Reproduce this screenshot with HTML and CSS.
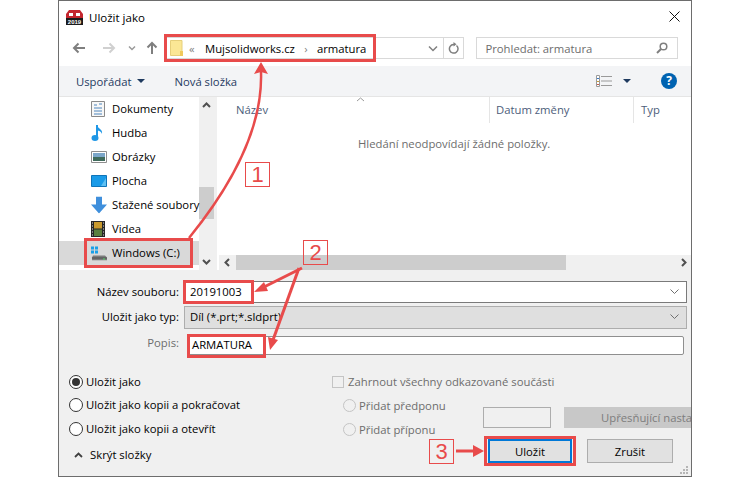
FILE: index.html
```html
<!DOCTYPE html>
<html lang="cs">
<head>
<meta charset="utf-8">
<title>Uložit jako</title>
<link rel="stylesheet" href="styles.css">
</head>
<body>
<div class="stage">
  <div class="dialog">
    <header class="titlebar">
      <svg class="app-icon" width="17" height="16" viewBox="0 0 17 16"><path d="M0 5 L3 1 H14 L17 5 V10 H0Z" fill="#c4262e"/><path d="M3 4h4v3H3zM10 4h4v3h-4z" fill="#fff"/><rect y="9" width="17" height="7" fill="#1b1b1b"/><text x="8.5" y="15" class="app-year">2019</text></svg>
      <span class="title-text">Uložit jako</span>
      <svg class="close-x" width="11" height="11" viewBox="0 0 11 11"><path d="M.5.5l10 10M10.500.5l-10 10" stroke="#111" stroke-width="1" fill="none"/></svg>
    </header>
    <div class="navbar">
      <svg class="nav-ic" width="14" height="12" viewBox="0 0 14 12"><path d="M13 6H2M6.500 1.500 2 6l4.500 4.500" stroke="#7f7f7f" stroke-width="2" fill="none"/></svg>
      <svg class="nav-ic nav-fwd" width="14" height="12" viewBox="0 0 14 12"><path d="M1 6h11M7.500 1.500 12 6l-4.500 4.500" stroke="#d0d0d0" stroke-width="2" fill="none"/></svg>
      <svg class="nav-ic nav-drop" width="8" height="6" viewBox="0 0 8 6"><path d="M1 1.500l3 3 3-3" stroke="#9a9a9a" stroke-width="1.500" fill="none"/></svg>
      <svg class="nav-ic nav-up" width="12" height="14" viewBox="0 0 12 14"><path d="M6 13V2M1.500 6.500 6 2l4.500 4.500" stroke="#7f7f7f" stroke-width="2" fill="none"/></svg>
      <div class="address">
        <svg class="folder" width="13" height="16" viewBox="0 0 13 16"><path d="M.5.500h11.500v15H.5z" fill="#fbe795" stroke="#e6cf7a"/><path d="M10 11h3v5h-3z" fill="#f0c95c"/></svg>
        <span class="crumb-more">«</span>
        <span class="crumb">Mujsolidworks.cz</span>
        <span class="crumb-sep">›</span>
        <span class="crumb">armatura</span>
        <svg class="addr-drop" width="10" height="7" viewBox="0 0 10 7"><path d="M1 1.500l4 4 4-4" stroke="#808080" stroke-width="1.500" fill="none"/></svg>
        <span class="addr-refresh"><svg width="11" height="12" viewBox="0 0 11 12"><path d="M8.500 3.500A4.300 4.300 0 1 1 5.500 2.500H7" stroke="#7f7f7f" stroke-width="1.500" fill="none"/><path d="M5.500 0l3 2.300-3 2.200z" fill="#7f7f7f"/></svg></span>
      </div>
      <div class="search">
        <span>Prohledat: armatura</span>
        <svg width="12" height="12" viewBox="0 0 12 12"><circle cx="7.500" cy="4.500" r="3.300" stroke="#7f7f7f" stroke-width="1.500" fill="none"/><path d="M5 7l-4 4" stroke="#7f7f7f" stroke-width="2"/></svg>
      </div>
    </div>
    <div class="toolbar">
      <span class="tool">Uspořádat</span>
      <span class="tool-caret"></span>
      <span class="tool tool-new">Nová složka</span>
      <svg class="view-ic" width="16" height="12" viewBox="0 0 16 12"><path d="M.5.500h3v11h-3z" fill="#fff" stroke="#9a9a9a"/><path d="M1 3h2v1H1z" fill="#3a7bc8"/><path d="M1 6h2v1H1z" fill="#caa03c"/><path d="M1 9h2v1H1z" fill="#c75c4a"/><path d="M5 1.500h11M5 6h11M5 10.500h11" stroke="#9a9a9a"/></svg>
      <span class="tool-caret caret-view"></span>
      <span class="help">?</span>
    </div>
    <div class="browser">
      <nav class="sidebar">
        <div class="nav-list">
          <div class="nav-item">
            <svg width="14" height="16" viewBox="0 0 14 16"><path d="M.5.500h13v15H.5z" fill="#f7f7f7" stroke="#8a8a8a"/><path d="M3 4h3M8 3h3M3 7h8M3 10h8M3 13h8" stroke="#4f86bd"/></svg>
            <span>Dokumenty</span>
          </div>
          <div class="nav-item">
            <svg width="14" height="18" viewBox="0 0 14 18"><path d="M6 1v12" stroke="#1f97e6" stroke-width="2"/><path d="M6 1c1 4 6 4 5 9-1-3-3-3-5-4z" fill="#1f97e6"/><ellipse cx="4" cy="14" rx="3.500" ry="3" fill="#1f97e6"/></svg>
            <span>Hudba</span>
          </div>
          <div class="nav-item">
            <svg width="16" height="12" viewBox="0 0 16 12"><path d="M.5.500h15v11H.5z" fill="#fff" stroke="#8e8e8e"/><path d="M2 2h12v4H2z" fill="#7ba6c9"/><path d="M2 6h12v4H2z" fill="#3f6b5c"/></svg>
            <span>Obrázky</span>
          </div>
          <div class="nav-item">
            <svg width="16" height="12" viewBox="0 0 16 12"><path d="M.5.500h15v11H.5z" fill="#1a9be8" stroke="#0f74b8"/><path d="M10 11 15 3v8z" fill="#5fc0f2"/></svg>
            <span>Plocha</span>
          </div>
          <div class="nav-item">
            <svg width="16" height="17" viewBox="0 0 16 17"><path d="M5 0h6v8h5l-8 9-8-9h5z" fill="#3f8fdc"/></svg>
            <span>Stažené soubory</span>
          </div>
          <div class="nav-item">
            <svg width="14" height="16" viewBox="0 0 14 16"><rect width="14" height="16" fill="#262626"/><rect x="3" y="1" width="8" height="6.500" fill="#c99a2e"/><rect x="3" y="8.500" width="8" height="6.500" fill="#5a7f3e"/><path d="M1 2h1M1 5h1M1 8h1M1 11h1M1 14h1M12 2h1M12 5h1M12 8h1M12 11h1M12 14h1" stroke="#ddd"/></svg>
            <span>Videa</span>
          </div>
          <div class="nav-item nav-selected">
            <svg width="16" height="15" viewBox="0 0 16 15"><path d="M0 1h3v3H0zM4 1h3v3H4zM0 5h3v3H0zM4 5h3v3H4z" fill="#19a0e8"/><path d="M2 10h12l2 2v3H1v-3z" fill="#7c7c7c"/><path d="M1 12h15v1H1z" fill="#4d4d4d"/><path d="M12 13h2v1h-2z" fill="#4cd964"/></svg>
            <span>Windows (C:)</span>
          </div>
        </div>
        <div class="side-scroll">
          <svg class="sc-btn" width="9" height="6" viewBox="0 0 9 6"><path d="M1 5l3.500-3.500L8 5" stroke="#505050" stroke-width="2" fill="none"/></svg>
          <span class="side-thumb"></span>
          <svg class="sc-btn sc-down" width="9" height="6" viewBox="0 0 9 6"><path d="M1 1l3.500 3.500L8 1" stroke="#505050" stroke-width="2" fill="none"/></svg>
        </div>
      </nav>
      <section class="files">
        <div class="col-head">
          <span class="col col-name">Název<svg class="sort" width="9" height="5" viewBox="0 0 9 5"><path d="M1 4l3.500-3L8 4" stroke="#9a9a9a" fill="none"/></svg></span>
          <span class="col col-date">Datum změny</span>
          <span class="col col-type">Typ</span>
        </div>
        <p class="empty">Hledání neodpovídají žádné položky.</p>
        <div class="h-scroll">
          <svg class="hs-left" width="6" height="9" viewBox="0 0 6 9"><path d="M5 1 1.500 4.500 5 8" stroke="#505050" stroke-width="2" fill="none"/></svg>
          <span class="h-thumb"></span>
          <svg class="hs-right" width="6" height="9" viewBox="0 0 6 9"><path d="M1 1l3.500 3.500L1 8" stroke="#505050" stroke-width="2" fill="none"/></svg>
        </div>
      </section>
    </div>
    <div class="lower">
      <div class="form">
        <label class="f-label">Název souboru:</label>
        <div class="field field-name"><span>20191003</span><svg width="9" height="5" viewBox="0 0 9 5"><path d="M.5.500l4 4 4-4" stroke="#6f6f6f" fill="none"/></svg></div>
        <label class="f-label">Uložit jako typ:</label>
        <div class="field field-type"><span>Díl (*.prt;*.sldprt)</span><svg width="9" height="5" viewBox="0 0 9 5"><path d="M.5.500l4 4 4-4" stroke="#6f6f6f" fill="none"/></svg></div>
        <label class="f-label f-muted">Popis:</label>
        <div class="field field-desc"><span>ARMATURA</span></div>
      </div>
      <div class="options">
        <div class="opt-left">
          <div class="radio-row r1"><span class="radio radio-on"></span><span>Uložit jako</span></div>
          <div class="radio-row r2"><span class="radio"></span><span>Uložit jako kopii a pokračovat</span></div>
          <div class="radio-row r3"><span class="radio"></span><span>Uložit jako kopii a otevřít</span></div>
          <div class="hide-row"><svg width="9" height="6" viewBox="0 0 9 6"><path d="M1 5l3.500-3.500L8 5" stroke="#404040" stroke-width="1.800" fill="none"/></svg><span>Skrýt složky</span></div>
        </div>
        <div class="opt-mid">
          <div class="check-row"><span class="check"></span><span>Zahrnout všechny odkazované součásti</span></div>
          <div class="radio-row off r2b"><span class="radio"></span><span>Přidat předponu</span></div>
          <div class="radio-row off r3b"><span class="radio"></span><span>Přidat příponu</span></div>
        </div>
        <div class="opt-right">
          <div class="adv-row">
            <span class="adv-input"></span>
            <span class="adv-btn">Upřesňující nasta</span>
          </div>
          <div class="btn-row">
            <button class="btn btn-save">Uložit</button>
            <button class="btn btn-cancel">Zrušit</button>
          </div>
        </div>
      </div>
      <svg class="grip" width="9" height="9" viewBox="0 0 9 9"><path d="M7 1h2v2H7zM4 4h2v2H4zM7 4h2v2H7zM1 7h2v2H1zM4 7h2v2H4zM7 7h2v2H7z" fill="#b5b5b5"/></svg>
    </div>
  </div>
  <svg class="marks" width="750" height="477" viewBox="0 0 750 477">
    <g fill="none" stroke="#e84b4b" stroke-width="3">
      <rect x="165.500" y="35.500" width="209" height="25"/>
      <rect x="85.500" y="239.500" width="106" height="27"/>
      <rect x="184.500" y="281.500" width="68" height="21"/>
      <rect x="188.500" y="335.500" width="76" height="21"/>
      <rect x="485.500" y="437.500" width="89" height="27"/>
      <path d="M189 238C228 190 263 130 261 72" stroke-width="2.500"/>
      <path d="M302 268 262 288"/>
      <path d="M299 268 273 340"/>
      <path d="M456 451H476"/>
    </g>
    <g fill="#e84b4b">
      <path d="M261 62 268 74 261 72 254 74Z"/>
      <path d="M254 292 264 282 268 291Z"/>
      <path d="M270 350 268 337 278 340Z"/>
      <path d="M484 451 473 445V457Z"/>
    </g>
  </svg>
  <span class="tag tag1">1</span>
  <span class="tag tag2">2</span>
  <span class="tag tag3">3</span>
</div>
</body>
</html>
```

FILE: styles.css
```css
* { box-sizing: border-box; }
html, body { margin: 0; padding: 0; background: #fff; }
body { font-family: "Open Sans", "Noto Sans", sans-serif; font-size: 11.3px; color: #000; overflow: hidden; }
.stage { position: relative; width: 750px; height: 477px; padding-left: 58px; }
.dialog { width: 634px; height: 477px; border: 1px solid #6d6d6d; background: #fff; display: flex; flex-direction: column; overflow: hidden; }

.titlebar { height: 35px; flex: none; display: flex; align-items: center; padding: 0 0 3px 7px; gap: 6px; }
.app-year { font: bold 6px "Liberation Sans", sans-serif; fill: #fff; text-anchor: middle; }
.title-text { font-size: 11.5px; }
.close-x { margin-left: auto; margin-right: 11px; margin-top: -1px; }

.navbar { height: 30px; flex: none; display: flex; align-items: center; padding: 0 13px 6px 13px; }
.nav-ic { flex: none; }
.nav-fwd { margin-left: 16px; }
.nav-drop { margin-left: 12px; }
.nav-up { margin-left: 10px; margin-right: 6px; }
.address { width: 300px; height: 22px; border: 1px solid #d9d9d9; display: flex; align-items: center; padding-left: 4px; margin-left: 1px; }
.folder { flex: none; }
.crumb-more { margin-left: 6px; color: #7f7f7f; width: 16px; }
.crumb { color: #000; }
.crumb-sep { color: #7f7f7f; width: 22px; text-align: center; }
.addr-drop { margin-left: auto; margin-right: 5px; }
.addr-refresh { width: 20px; height: 20px; border-left: 1px solid #d9d9d9; display: flex; align-items: center; justify-content: center; }
.search { width: 202px; height: 22px; margin-left: 12px; border: 1px solid #d9d9d9; display: flex; align-items: center; justify-content: space-between; padding: 0 9px 0 8px; color: #6d6d6d; }

.toolbar { height: 31px; flex: none; background: #f3f4f6; border-bottom: 1px solid #e5e5e5; display: flex; align-items: center; padding: 0 14px 0 17px; }
.tool { color: #1f3a5f; }
.tool-caret { width: 0; height: 0; border-left: 4px solid transparent; border-right: 4px solid transparent; border-top: 4px solid #1f3a5f; margin-left: 6px; }
.tool-new { margin-left: 29px; }
.view-ic { margin-left: auto; }
.caret-view { margin-left: 11px; }
.help { width: 16px; height: 16px; border-radius: 50%; background: #0063b1; color: #fff; font-weight: 700; font-size: 12px; line-height: 16px; text-align: center; margin-left: 30px; }

.browser { height: 173px; flex: none; display: flex; }
.sidebar { width: 158px; flex: none; display: flex; border-right: 3px solid #f0f0f0; }
.nav-list { width: 140px; flex: none; }
.nav-item { height: 24px; display: flex; align-items: center; padding: 0 0 2px 53px; position: relative; white-space: nowrap; }
.nav-item svg { position: absolute; left: 32px; top: 50%; transform: translateY(-50%); }
.nav-selected { background: #d9d9d9; }
.side-scroll { width: 15px; flex: none; background: #f0f0f0; display: flex; flex-direction: column; align-items: center; padding-top: 5px; }
.sc-btn { flex: none; }
.side-thumb { width: 15px; height: 32px; margin-top: 79px; background: #cdcdcd; flex: none; }
.sc-down { margin-top: 40px; }

.files { flex: 1; min-width: 0; display: flex; flex-direction: column; }
.col-head { height: 26px; flex: none; display: flex; align-items: center; color: #4c5d7a; }
.col { height: 100%; display: flex; align-items: center; position: relative; border-right: 1px solid #e5e5e5; padding-bottom: 2px; }
.col-name { width: 273px; padding-left: 19px; }
.sort { position: absolute; top: 0; left: 139px; }
.col-date { width: 144px; padding-left: 6px; }
.col-type { border-right: 0; padding-left: 7px; }
.empty { margin: 13px 0 0 141px; color: #6d6d6d; flex: 1; }
.h-scroll { height: 15px; flex: none; margin-left: 2px; background: #f0f0f0; display: flex; align-items: center; }
.hs-left { margin-left: 5px; }
.h-thumb { width: 330px; height: 15px; background: #cdcdcd; margin-left: 6px; }
.hs-right { margin-left: auto; margin-right: 4px; }

.lower { flex: 1; background: #f0f0f0; position: relative; padding-top: 11px; }
.form { display: grid; grid-template-columns: 120px 1fr; row-gap: 3px; padding-right: 4px; }
.f-label { text-align: right; line-height: 22px; }
.f-muted { color: #6d6d6d; }
.field { margin-left: 5px; display: flex; align-items: center; justify-content: space-between; padding: 0 7px 2px 5px; border: 1px solid #7a7a7a; background: #fff; height: 22px; }
.field-type { background: #dfdfdf; border-color: #adadad; height: 23px; }
.field-desc { margin: 4px 3px 0 9px; height: 19px; padding-left: 3px; border-color: #8f8f8f; border-radius: 2px; }

.options { display: flex; margin-top: 18px; }
.opt-left { width: 273px; padding-left: 10px; flex: none; }
.radio-row { display: flex; align-items: center; gap: 3px; height: 17px; }
.radio { width: 14px; height: 14px; border: 1px solid #333; border-radius: 50%; background: #fff; flex: none; position: relative; }
.radio-on::after { content: ""; position: absolute; left: 2px; top: 2px; width: 8px; height: 8px; border-radius: 50%; background: #333; }
.r2 { margin-top: 6px; }
.r3 { margin-top: 7px; }
.hide-row { display: flex; align-items: center; gap: 7px; margin-top: 9px; padding-left: 5px; height: 17px; }
.opt-mid { width: 151px; flex: none; color: #6d6d6d; white-space: nowrap; }
.check-row { display: flex; align-items: center; gap: 4px; height: 17px; }
.check { width: 12px; height: 12px; border: 1px solid #c4c4c4; background: #f0f0f0; flex: none; }
.off { margin-left: 11px; }
.off .radio { border-color: #c4c4c4; background: #f0f0f0; width: 13px; height: 13px; }
.r2b { margin-top: 7px; }
.r3b { margin-top: 7px; }
.opt-right { flex: 1; min-width: 0; padding-top: 34px; }
.adv-row { display: flex; gap: 13px; height: 22px; white-space: nowrap; }
.adv-input { width: 68px; height: 21px; border: 1px solid #adadad; background: #f0f0f0; flex: none; }
.adv-btn { flex: 1; min-width: 0; height: 21px; background: #c8c8c8; color: #7d7d7d; padding-left: 37px; line-height: 21px; }
.btn-row { display: flex; gap: 15px; margin: 10px 0 0 5px; }
.btn { font: inherit; color: #000; height: 24px; padding: 0; background: #e1e1e1; border: 1px solid #adadad; }
.btn-save { width: 84px; border: 2px solid #0078d7; }
.btn-cancel { width: 86px; }
.grip { position: absolute; right: 3px; bottom: 2px; }

.marks { position: absolute; left: 0; top: 0; pointer-events: none; }
.tag { position: absolute; width: 25px; height: 25px; border: 1px solid #e84b4b; color: #e84b4b; font: 22px/23px "Liberation Sans", sans-serif; text-align: center; }
.tag1 { left: 245px; top: 162px; }
.tag2 { left: 303px; top: 240px; }
.tag3 { left: 429px; top: 439px; }
```
